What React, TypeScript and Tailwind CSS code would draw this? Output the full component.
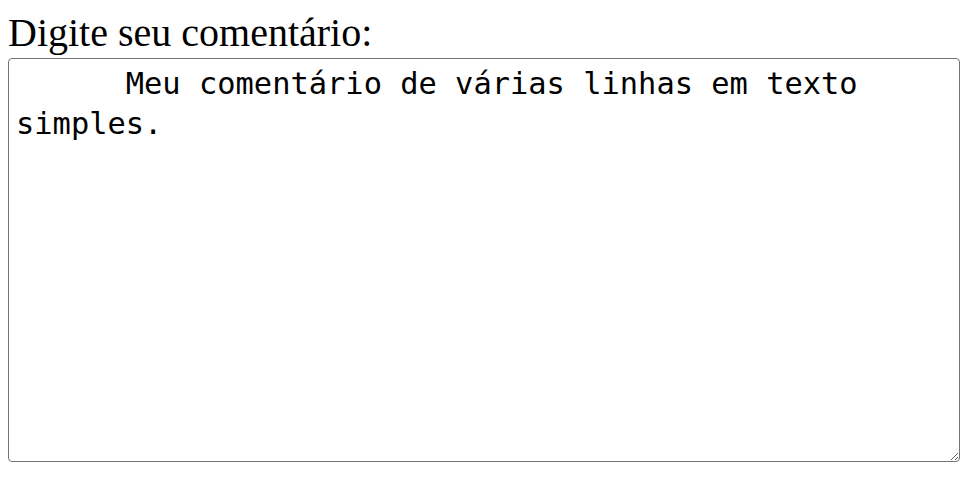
import React from "react";

export default function App() {
  return (
    <div className="flex flex-col items-start p-2 bg-white min-h-[497px]">
      <label
        htmlFor="c"
        className="block text-[40px] leading-[50px] text-black font-['Liberation_Serif','Times_New_Roman',serif]"
      >
        Digite seu comentário:
      </label>
      <textarea
        id="c"
        className="block w-[952px] h-[404px] border border-[#767676] rounded-[4px] px-[7px] pt-[5px] pb-[2px] text-[30.4px] leading-[40px] text-black bg-white resize-y outline-none font-['DejaVu_Sans_Mono',monospace]"
        defaultValue={"      Meu comentário de várias linhas em texto simples."}
      />
    </div>
  );
}
